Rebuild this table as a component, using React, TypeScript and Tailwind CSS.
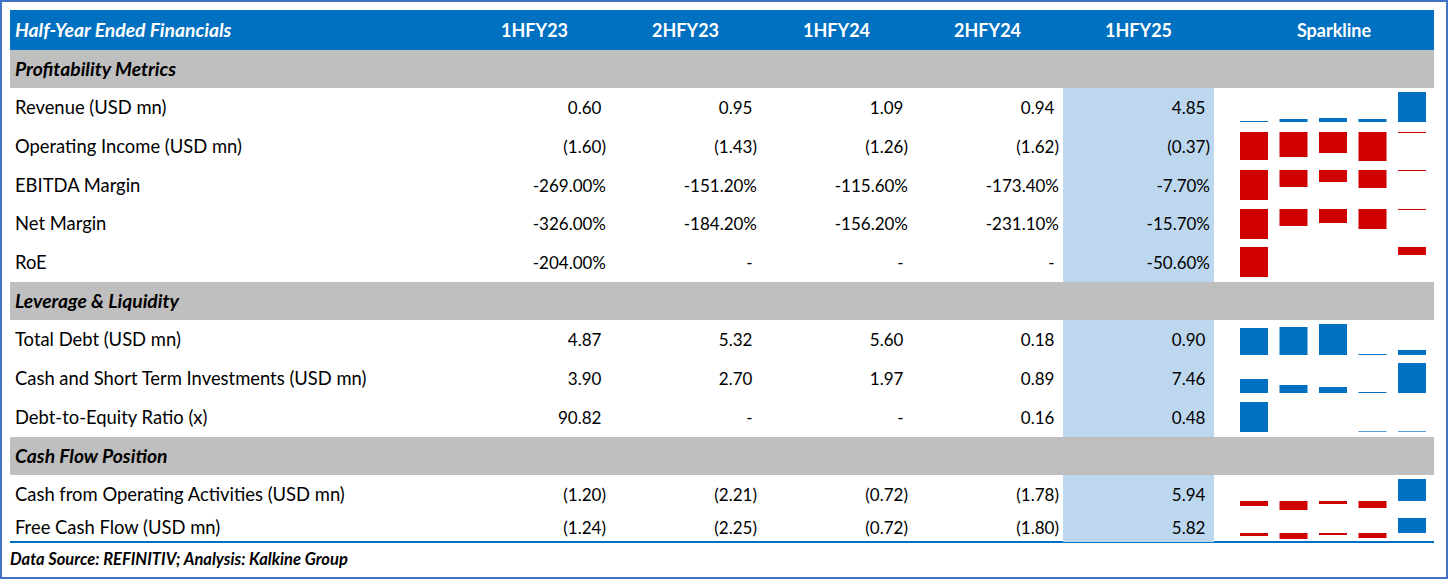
import React from "react";

type Bar = [number, number, string?];
type Row = {
  label: string;
  values: string[];
  h: number;
  bars: (Bar | null)[];
};

const BLUE = "#0070c0";
const RED = "#d00000";

const cols = ["1HFY23", "2HFY23", "1HFY24", "2HFY24", "1HFY25"];

const sections: { title: string; rows: Row[] }[] = [
  {
    title: "Profitability Metrics",
    rows: [
      {
        label: "Revenue (USD mn)",
        values: ["0.60", "0.95", "1.09", "0.94", "4.85"],
        h: 39,
        bars: [[33, 1], [31, 3], [30, 4], [31, 3], [4, 30]],
      },
      {
        label: "Operating Income (USD mn)",
        values: ["(1.60)", "(1.43)", "(1.26)", "(1.62)", "(0.37)"],
        h: 39,
        bars: [[5, 28, RED], [5, 25, RED], [5, 21, RED], [5, 29, RED], [5, 1, RED]],
      },
      {
        label: "EBITDA Margin",
        values: ["-269.00%", "-151.20%", "-115.60%", "-173.40%", "-7.70%"],
        h: 39,
        bars: [[4, 30, RED], [4, 17, RED], [4, 12, RED], [4, 18, RED], [4, 1, RED]],
      },
      {
        label: "Net Margin",
        values: ["-326.00%", "-184.20%", "-156.20%", "-231.10%", "-15.70%"],
        h: 38,
        bars: [[4, 30, RED], [4, 17, RED], [4, 14, RED], [4, 20, RED], [4, 1, RED]],
      },
      {
        label: "RoE",
        values: ["-204.00%", "-", "-", "-", "-50.60%"],
        h: 39,
        bars: [[4, 30, RED], null, null, null, [4, 8, RED]],
      },
    ],
  },
  {
    title: "Leverage & Liquidity",
    rows: [
      {
        label: "Total Debt (USD mn)",
        values: ["4.87", "5.32", "5.60", "0.18", "0.90"],
        h: 39,
        bars: [[8, 27], [7, 28], [4, 31], [34, 1], [30, 5]],
      },
      {
        label: "Cash and Short Term Investments (USD mn)",
        values: ["3.90", "2.70", "1.97", "0.89", "7.46"],
        h: 39,
        bars: [[20, 14], [26, 8], [28, 6], [33, 1], [4, 30]],
      },
      {
        label: "Debt-to-Equity Ratio (x)",
        values: ["90.82", "-", "-", "0.16", "0.48"],
        h: 39,
        bars: [[4, 30], null, null, [33, 1, "#5b9bd5"], [33, 1, "#5b9bd5"]],
      },
    ],
  },
  {
    title: "Cash Flow Position",
    rows: [
      {
        label: "Cash from Operating Activities (USD mn)",
        values: ["(1.20)", "(2.21)", "(0.72)", "(1.78)", "5.94"],
        h: 39,
        bars: [[26, 5, RED], [26, 9, RED], [26, 3, RED], [26, 7, RED], [4, 22]],
      },
      {
        label: "Free Cash Flow (USD mn)",
        values: ["(1.24)", "(2.25)", "(0.72)", "(1.80)", "5.82"],
        h: 27,
        bars: [[19, 3, RED], [19, 6, RED], [19, 2, RED], [19, 5, RED], [4, 15]],
      },
    ],
  },
];

const Value = ({ v }: { v: string }) => {
  // accounting style: plain numbers keep room for the closing paren
  const pad = !v.endsWith(")") && !v.endsWith("%");
  return (
    <span>
      {v}
      {pad && <span className="invisible">)</span>}
    </span>
  );
};

const Sparkline = ({ bars, h }: { bars: (Bar | null)[]; h: number }) => (
  <svg width={220} height={h} className="block">
    {bars.map((b, i) =>
      b ? (
        <rect
          key={i}
          x={26 + i * 39.5}
          y={b[0]}
          width={28}
          height={b[1]}
          fill={b[2] ?? BLUE}
        />
      ) : null
    )}
  </svg>
);

const App = () => {
  return (
    <div
      className="w-[1448px] h-[579px] border-2 border-[#4472c4] bg-white pt-[8px] pl-[8px] text-black"
      style={{ fontFamily: "Lato, 'Open Sans', sans-serif" }}
    >
      <div className="w-[1424px]">
        {/* header */}
        <div className="grid grid-cols-[449px_151px_151px_151px_151px_151px_220px] h-[40px] items-center bg-[#0070c0] text-white font-bold text-[18px]">
          <p className="pl-[5px] italic text-[19.3px]">Half-Year Ended Financials</p>
          {cols.map((c) => (
            <p key={c} className="text-center">
              {c}
            </p>
          ))}
          <p className="text-center pl-[20px]">Sparkline</p>
        </div>

        {sections.map((s) => (
          <div key={s.title}>
            <div className="h-[38px] flex items-center bg-[#bfbfbf] pl-[5px] font-bold italic text-[19.3px]">
              {s.title}
            </div>
            {s.rows.map((r) => (
              <div
                key={r.label}
                className="grid grid-cols-[449px_151px_151px_151px_151px_151px_220px] text-[17px]"
                style={{ height: r.h }}
              >
                <div className="flex items-center pl-[5px] text-[18.4px]">{r.label}</div>
                {r.values.map((v, i) => (
                  <div
                    key={i}
                    className={
                      "flex items-center justify-end pr-[4px] " +
                      (i === 4 ? "bg-[#bdd7ee]" : "")
                    }
                  >
                    <Value v={v} />
                  </div>
                ))}
                <Sparkline bars={r.bars} h={r.h} />
              </div>
            ))}
          </div>
        ))}

        <div className="h-[2px] bg-[#0070c0]" />
        <p className="h-[33px] flex items-center font-bold italic text-[16.5px]">
          Data Source: REFINITIV; Analysis: Kalkine Group
        </p>
      </div>
    </div>
  );
};

export default App;
